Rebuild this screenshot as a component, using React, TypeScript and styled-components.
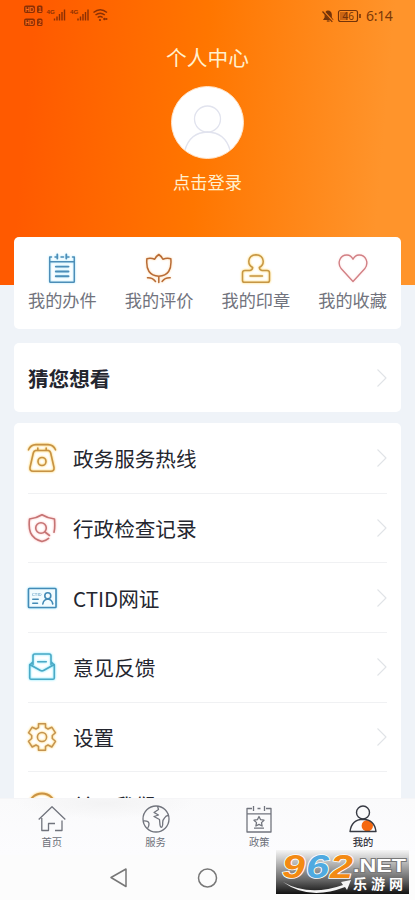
import React from 'react';
import styled, { createGlobalStyle } from 'styled-components';

const GlobalStyle = createGlobalStyle`
  * { box-sizing: border-box; }
  body { margin: 0; font-family: "Noto Sans CJK SC", sans-serif; }
`;

const Phone = styled.div`
  width: 415px;
  height: 900px;
  overflow: hidden;
  display: flex;
  flex-direction: column;
  background: #eff3f8;
`;

const Content = styled.main`
  height: 798px;
  flex: none;
  overflow: hidden;
  display: flex;
  flex-direction: column;
`;

const Hero = styled.header`
  height: 285px;
  flex: none;
  display: flex;
  flex-direction: column;
  align-items: center;
  background: linear-gradient(95deg, #ff5a00 8%, #ff7600 48%, #ff942b 90%);
`;

const StatusBar = styled.div`
  width: 100%;
  height: 32px;
  padding: 0 23px 0 24px;
  display: flex;
  justify-content: space-between;
  align-items: center;
`;

const StatusRight = styled.div`
  display: flex;
  align-items: center;
  gap: 5px;
`;

const Clock = styled.span`
  font: 14px/20px "Noto Sans", sans-serif;
  letter-spacing: -0.3px;
  width: 26px;
  white-space: nowrap;
  color: #7c3908;
`;

const Title = styled.h1`
  margin: 10px 0 0;
  font-size: 20.7px;
  line-height: 30px;
  font-weight: 400;
  color: #fff0cf;
`;

const Avatar = styled.div`
  width: 73px;
  height: 73px;
  margin-top: 14px;
  border-radius: 50%;
  overflow: hidden;
  background: #fff;
  border: 1px solid #ffe4c8;
`;

const LoginLabel = styled.div`
  margin-top: 11px;
  font-size: 17.2px;
  line-height: 24px;
  color: #fff0cf;
`;

const Card = styled.section`
  margin: 0 14px;
  flex: none;
  border-radius: 5px;
  background: #fff;
`;

const Shortcuts = styled(Card)`
  height: 92px;
  margin-top: -48px;
  display: grid;
  grid-template-columns: repeat(4, 1fr);
`;

const Shortcut = styled.div`
  padding-top: 14.5px;
  display: flex;
  flex-direction: column;
  align-items: center;
  font-size: 17.2px;
  line-height: 24px;
  color: #71737d;
  white-space: nowrap;
  svg { margin-bottom: 4.5px; }
`;

const SuggestCard = styled(Card)`
  height: 69px;
  margin-top: 14px;
  padding: 0 14px;
  display: flex;
  align-items: center;
  justify-content: space-between;
  font-size: 20.6px;
  font-weight: 700;
  color: #24262f;
`;

const MenuCard = styled(Card)`
  margin-top: 11px;
  padding: 1px 14px 0;
`;

const MenuRow = styled.div`
  height: 69.7px;
  display: flex;
  align-items: center;
  border-bottom: 1px solid #f0f1f3;
  color: #24262f;
  font-size: 20.6px;
`;

const MenuText = styled.span<{ $raised?: boolean }>`
  flex: 1;
  margin-left: 17px;
  line-height: 30px;
  padding-bottom: ${p => (p.$raised ? '3px' : '0')};
`;

const Glow = styled.svg<{ $glow: string }>`
  flex: none;
  overflow: visible;
  display: block;
  fill: none;
  stroke-linecap: round;
  stroke-linejoin: round;
  filter: drop-shadow(0 0 1.2px ${p => p.$glow});
`;

const Line = styled.svg`
  flex: none;
  overflow: visible;
  display: block;
  fill: none;
  stroke-linejoin: round;
`;

const TabBar = styled.nav`
  height: 57px;
  flex: none;
  display: grid;
  grid-template-columns: repeat(4, 1fr);
  background: radial-gradient(ellipse 90px 16px at 105px 4px, #f3f3f4, transparent), linear-gradient(#fafafb, #fcfcfe);
  border-top: 1px solid #f5f5f7;
`;

const Tab = styled.div<{ $active?: boolean }>`
  padding-top: 5px;
  display: flex;
  flex-direction: column;
  align-items: center;
  font-size: 10.3px;
  line-height: 16px;
  font-weight: ${p => (p.$active ? 500 : 400)};
  color: ${p => (p.$active ? '#383944' : '#6d707a')};
`;

const SystemNav = styled.footer`
  position: relative;
  height: 45px;
  padding: 0 109px;
  display: flex;
  align-items: flex-start;
  background: #fcfcfc;
`;

const Watermark = styled.div`
  position: absolute;
  right: 6px;
  top: -5px;
  width: 133px;
  height: 44px;
  background: linear-gradient(#f5f5f5 0%, #b7b7b7 30%, #666 68%, #111 100%);
  svg { display: block; }
`;

const SignalBars = ({ x }: { x: number }) => (
  <g>
    <text x={x} y="9" fontSize="6.2" fontWeight="700" fontFamily="Liberation Sans">4G</text>
    <path d={`M${x + 8} 15.5v-2M${x + 10.5} 15.5v-4M${x + 13} 15.5V9M${x + 15.5} 15.5V7M${x + 18} 15.5V4.5`} stroke="#8b3004" strokeWidth="1.4" />
  </g>
);

const StatusSignals = () => (
  <svg width="86" height="22" fill="#8b3004">
    <rect x="0" y="0.5" width="11" height="7.5" rx="2" />
    <rect x="13" y="0.5" width="5.5" height="7.5" rx="1.5" />
    <rect x="0" y="13.5" width="11" height="7.5" rx="2" />
    <rect x="13" y="13.5" width="5.5" height="7.5" rx="1.5" />
    <g fill="#ff6d18" fontSize="6.3" fontWeight="700" fontFamily="Liberation Sans">
      <text x="1" y="6.6">HD</text><text x="14" y="6.6">1</text>
      <text x="1" y="19.6">HD</text><text x="14" y="19.6">2</text>
    </g>
    <SignalBars x={22.5} />
    <SignalBars x={46} />
    <g fill="none" stroke="#8b3004" strokeWidth="1.5">
      <path d="M69.5 7.5q6.700-5.500 13.500 0M71.500 10q4.700-3.700 9.300 0M73.700 12.500q2.500-2 5 0" />
    </g>
    <circle cx="76" cy="15" r="1.100" /><circle cx="80.500" cy="14" r="1.300" /><circle cx="82.500" cy="14" r="1" />
  </svg>
);

const StatusBattery = () => (
  <svg width="39" height="14" fill="none" stroke="#74340a" strokeWidth="1.200">
    <path d="M2 10.500L3.200 8.500V5.500Q3.500 2.500 6 2.200Q9 2.500 9.200 5.500V8.500L10.500 10.500Z" fill="#74340a" />
    <path d="M4.800 12h2.800" />
    <path d="M.8 1.800L11 12.500" stroke="#ff8518" strokeWidth="2" /><path d="M.5 2.500L10.300 12.800" />
    <rect x="16.500" y="1.500" width="19" height="11" rx="2" />
    <rect x="18" y="3" width="8" height="8" fill="#cb6513" stroke="none" />
    <path d="M38 5v4" strokeWidth="1.600" />
    <text x="20.500" y="10.800" fontSize="10" fill="#74340a" stroke="none" fontFamily="Noto Sans">46</text>
  </svg>
);

const Chevron = () => (
  <Line width="10" height="18" stroke="#e0e3e7" strokeWidth="1.100"><path d="M.5 .5L9 9L.5 17.500" /></Line>
);

const PlannerIcon = () => (
  <Glow $glow="#a5e8ff" width="30" height="32" stroke="#4d8eb8" strokeWidth="1.500">
    <path d="M4.500 5H2.700V29.500Q2.700 30.300 3.500 30.300H26.500Q27.300 30.300 27.300 29.500V5H25.500M14 5h2.500M3 9.800H27M8 5h1.500M20.500 5H22" />
    <path d="M10.300 2.500V6.500M19.300 2.500V6.500" strokeWidth="1.800" />
    <path d="M8.800 14.600H21.500M8.800 19.500H21.500M8.800 24.300H21.500" strokeWidth="1.900" />
  </Glow>
);

const TulipIcon = () => (
  <Glow $glow="#ffd7a5" width="30" height="32" stroke="#b96c36" strokeWidth="1.500">
    <path d="M14.800 2.500Q17.500 4.200 18.900 7.200Q22.800 5.800 26.800 6.700Q28.500 23.500 14.800 24.200Q1.200 23.500 2.900 6.700Q6.900 5.800 10.700 7.200Q12 4.200 14.800 2.500ZM14.800 24.200V30.500M3.500 25.800Q8.500 25.500 11.500 29.500M26.200 25.800Q21 25.500 18.100 29.500" />
  </Glow>
);

const StampIcon = () => (
  <Glow $glow="#ffd04c" width="30" height="32" stroke="#c69645" strokeWidth="1.500">
    <path d="M11.700 15.500Q7.500 13.500 7.800 9Q8.400 3 15 2.700Q21.600 3 22.200 9Q22.500 13.500 18.300 15.500Q18.500 18.200 21 18.500H26Q28.500 18.500 28.500 20.700V28.500Q28.500 30.300 26.700 30.300H3.300Q1.500 30.300 1.500 28.500V20.700Q1.500 18.500 4 18.500H9Q11.500 18.200 11.700 15.500ZM9 24H21.500" />
  </Glow>
);

const HeartIcon = () => (
  <Glow $glow="#ffe1e1" width="30" height="32" stroke="#d28085" strokeWidth="1.400">
    <path d="M15 29.500L3.300 16.800C-1.500 10.500 2.500 2.800 9 3Q13 3.200 15 7.200Q17 3.200 21 3C27.500 2.800 31.500 10.500 26.700 16.800Z" />
  </Glow>
);

const PhoneIcon = () => (
  <Glow $glow="#ffc939" width="28" height="28" stroke="#c69245" strokeWidth="1.600">
    <path d="M.5 5.800Q2.500 .8 8 .6H20Q25.500 .8 27.500 5.800M7.500 6.500H20.500Q22.200 7 22.700 9L26 23.500Q26.500 27.300 23 27.300H5Q1.500 27.300 2 23.500L5.300 9Q5.800 7 7.500 6.500ZM9.800 4V6M18.200 4V6" />
    <circle cx="14" cy="17.500" r="4" />
  </Glow>
);

const ShieldIcon = () => (
  <Glow $glow="#ffb7b7" width="28" height="28" stroke="#c57474" strokeWidth="1.600">
    <path d="M26 18.200Q27.200 14.500 26.500 5Q20 4.500 14 .8Q8 4.500 1.500 5C.3 15.500 1.500 24 14 27.600Q18 26.500 20.600 24.400" />
    <circle cx="13" cy="14" r="5.300" /><path d="M17 18L21.500 21.500" />
  </Glow>
);

const IdIcon = () => (
  <Glow $glow="#80dbfb" width="28" height="28" stroke="#438bb6" strokeWidth="1.600">
    <rect x=".5" y="4.500" width="27.500" height="19" rx=".7" fill="#f2fcff" />
    <circle cx="19.800" cy="11.800" r="3" /><path d="M14.800 20Q15.500 15.500 19.800 15Q24 15.500 24.800 20" />
    <path d="M4.800 15.200H10.200M4.800 19.200H9.500" />
    <text x="3.800" y="12" fontSize="4.200" fill="#438bb6" stroke="none" fontFamily="Liberation Sans">CTID</text>
  </Glow>
);

const MailIcon = () => (
  <Glow $glow="#65e3ff" width="28" height="28" stroke="#4ba9c5" strokeWidth="1.600">
    <path d="M5 11.500V2.800Q5 1 6.800 1H21.200Q23 1 23 2.800V11.500M5 8.700L1.700 12V25Q1.700 26.300 3 26.300H25Q26.300 26.300 26.300 25V12L23 8.700M1.700 11.500L12.500 17.500Q14 18.200 15.500 17.500L26.300 11.500M9.700 8.700H18.300" />
  </Glow>
);

const GearIcon = () => (
  <Glow $glow="#ffcd4c" width="28" height="28" stroke="#c59450" strokeWidth="1.500">
    <path d="M10.500 .7H17.500V4.700L20 6L23.800 4.200L27.500 9.800L24.300 12.500V15.500L27.500 18.300L23.800 24L20 22L17.500 23.300V27.300H10.500V23.300L8 22L4.200 24L.5 18.300L3.700 15.500V12.500L.5 9.800L4.200 4.200L8 6L10.500 4.700Z" />
    <circle cx="14" cy="14" r="4.600" />
  </Glow>
);

const AboutIcon = () => (
  <Glow $glow="#ffbf35" width="28" height="28" stroke="#c99245" strokeWidth="1.800"><circle cx="14" cy="14" r="13.500" /></Glow>
);

const HomeIcon = () => (
  <Line width="28" height="30" stroke="#71747d" strokeWidth="1.300">
    <path d="M.7 15.500L14 2.800L27.300 15.500M3.800 14V26.500H10.500V19.500H17M17 26.500H24V16.500" />
  </Line>
);

const GlobeIcon = () => (
  <Line width="28" height="30" stroke="#71747d" strokeWidth="1.300">
    <circle cx="14" cy="15" r="13" />
    <path d="M15.500 2L16.500 5.500L12 8.500L16.500 11L12 12.500L17.500 15.500L18 21Q18.500 24 20 23Q21 21.500 20.700 18.500Q20.500 16 22.500 14Q24 11.500 26 11.500M1.200 17Q6.500 16.500 7 19.500Q7.200 22 5.500 24.500" />
  </Line>
);

const PolicyIcon = () => (
  <Line width="28" height="30" stroke="#71747d" strokeWidth="1.300">
    <path d="M5 4.500H2V28H26V4.500H23M2 9.800H26M8.500 2V7M12.500 4.500H15.500M19.500 2V7M5 4.500H7M21 4.500H23M9 24.200H19M14 12.500L15.600 15.700L19 16.200L16.500 18.600L17.100 22L14 20.400L10.900 22L11.500 18.600L9 16.200L12.400 15.700Z" />
  </Line>
);

const PersonIcon = () => (
  <Line width="28" height="30" stroke="#373a43" strokeWidth="1.400">
    <circle cx="18.300" cy="21.800" r="5.700" fill="#f5680f" stroke="none" />
    <circle cx="14" cy="8.500" r="6.500" /><path d="M1 27.500Q2.500 15.500 14 15.200Q25.500 15.500 27 27.500ZM1 27.500H27" />
  </Line>
);

const shortcuts = [
  { label: '我的办件', Icon: PlannerIcon }, { label: '我的评价', Icon: TulipIcon },
  { label: '我的印章', Icon: StampIcon }, { label: '我的收藏', Icon: HeartIcon },
];
const menu = [
  { label: '政务服务热线', Icon: PhoneIcon }, { label: '行政检查记录', Icon: ShieldIcon },
  { label: 'CTID网证', Icon: IdIcon }, { label: '意见反馈', Icon: MailIcon },
  { label: '设置', Icon: GearIcon }, { label: '关于我们', Icon: AboutIcon, raised: true },
];
const tabs = [
  { label: '首页', Icon: HomeIcon }, { label: '服务', Icon: GlobeIcon },
  { label: '政策', Icon: PolicyIcon }, { label: '我的', Icon: PersonIcon, active: true },
];

export default function App() {
  return (
    <Phone>
      <GlobalStyle />
      <Content>
        <Hero>
          <StatusBar>
            <StatusSignals />
            <StatusRight><StatusBattery /><Clock>6:14</Clock></StatusRight>
          </StatusBar>
          <Title>个人中心</Title>
          <Avatar>
            <svg width="71" height="71" fill="none" stroke="#e1e3ee" strokeWidth="1.300">
              <circle cx="35.500" cy="32" r="13" /><path d="M13 63Q18 45.500 35.500 45Q53 45.500 58 63" />
            </svg>
          </Avatar>
          <LoginLabel>点击登录</LoginLabel>
        </Hero>
        <Shortcuts>
          {shortcuts.map(({ label, Icon }) => <Shortcut key={label}><Icon />{label}</Shortcut>)}
        </Shortcuts>
        <SuggestCard>猜您想看<Chevron /></SuggestCard>
        <MenuCard>
          {menu.map(({ label, Icon, raised }) => <MenuRow key={label}><Icon /><MenuText $raised={raised}>{label}</MenuText><Chevron /></MenuRow>)}
        </MenuCard>
      </Content>
      <TabBar>
        {tabs.map(({ label, Icon, active }) => <Tab key={label} $active={active}><Icon />{label}</Tab>)}
      </TabBar>
      <SystemNav>
        <Line width="200" height="45" stroke="#777" strokeWidth="1.500">
          <path d="M2 22.500L17 14V31.500Z" /><circle cx="98.500" cy="23" r="9" />
        </Line>
        <Watermark>
          <svg width="133" height="44">
            <g fontFamily="Liberation Sans" fontWeight="700" fontStyle="italic" fontSize="33" stroke="#fff" strokeWidth="1.600" paintOrder="stroke">
              <text x="6" y="28" textLength="23" lengthAdjust="spacingAndGlyphs" fill="#f38a13">9</text>
              <text x="30" y="28" textLength="23" lengthAdjust="spacingAndGlyphs" fill="#50aae0">6</text>
              <text x="54" y="28" textLength="23" lengthAdjust="spacingAndGlyphs" fill="#f38a13">2</text>
            </g>
            <path d="M7 32Q33 47 67 35L65 32L75 30L71 40L69 37Q33 51 7 32Z" fill="#f5f5f5" />
            <text x="77" y="22" textLength="53" lengthAdjust="spacingAndGlyphs" fontFamily="Liberation Sans" fontWeight="700" fontSize="19" fill="#fff" stroke="#777" strokeWidth="1.800" paintOrder="stroke">.NET</text>
            <text x="77" y="38.500" textLength="50" fontFamily="Noto Sans CJK SC" fontWeight="700" fontSize="14" fill="#fff">乐游网</text>
          </svg>
        </Watermark>
      </SystemNav>
    </Phone>
  );
}
